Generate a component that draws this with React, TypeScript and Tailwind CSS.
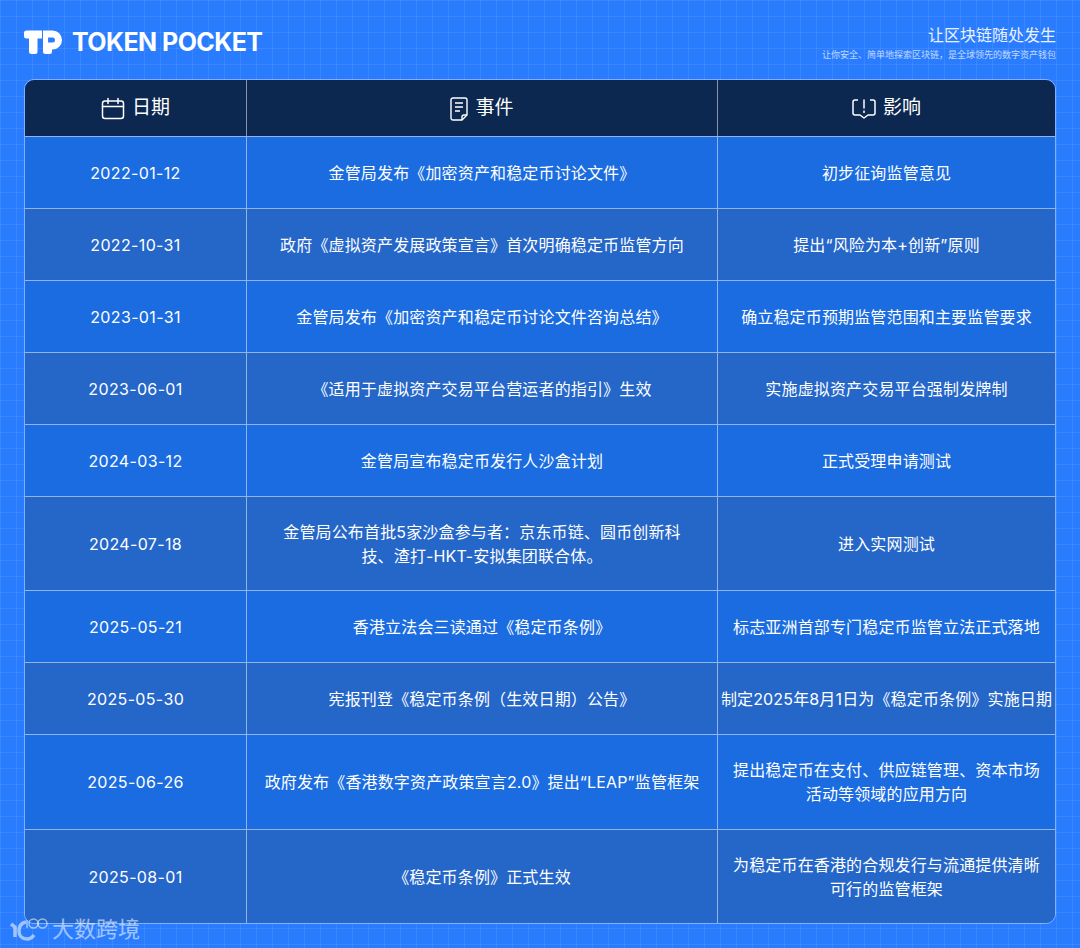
const rows = [
  { date: "2022-01-12", event: ["金管局发布《加密资产和稳定币讨论文件》"], impact: ["初步征询监管意见"], h: "h-[72px]" },
  { date: "2022-10-31", event: ["政府《虚拟资产发展政策宣言》首次明确稳定币监管方向"], impact: ["提出“风险为本+创新”原则"], h: "h-[72px]" },
  { date: "2023-01-31", event: ["金管局发布《加密资产和稳定币讨论文件咨询总结》"], impact: ["确立稳定币预期监管范围和主要监管要求"], h: "h-[72px]" },
  { date: "2023-06-01", event: ["《适用于虚拟资产交易平台营运者的指引》生效"], impact: ["实施虚拟资产交易平台强制发牌制"], h: "h-[72px]" },
  { date: "2024-03-12", event: ["金管局宣布稳定币发行人沙盒计划"], impact: ["正式受理申请测试"], h: "h-[72px]" },
  { date: "2024-07-18", event: ["金管局公布首批5家沙盒参与者：京东币链、圆币创新科", "技、渣打-HKT-安拟集团联合体。"], impact: ["进入实网测试"], h: "h-[94px]" },
  { date: "2025-05-21", event: ["香港立法会三读通过《稳定币条例》"], impact: ["标志亚洲首部专门稳定币监管立法正式落地"], h: "h-[72px]" },
  { date: "2025-05-30", event: ["宪报刊登《稳定币条例（生效日期）公告》"], impact: ["制定2025年8月1日为《稳定币条例》实施日期"], h: "h-[72px]" },
  { date: "2025-06-26", event: ["政府发布《香港数字资产政策宣言2.0》提出“LEAP”监管框架"], impact: ["提出稳定币在支付、供应链管理、资本市场", "活动等领域的应用方向"], h: "h-[95px]" },
  { date: "2025-08-01", event: ["《稳定币条例》正式生效"], impact: ["为稳定币在香港的合规发行与流通提供清晰", "可行的监管框架"], h: "h-[94px]" },
]

const CalendarIcon = () => (
  <svg width="24" height="24" viewBox="0 0 24 24" fill="none" stroke="currentColor" strokeWidth="1.5">
    <rect x="1.5" y="4" width="21" height="17.5" rx="2.5" />
    <path d="M1.5 9.5h21M7 1.500v5M17 1.500v5" strokeLinecap="round" />
  </svg>
)

const DocIcon = () => (
  <svg width="18" height="24" viewBox="0 0 18 24" fill="none" stroke="currentColor" strokeWidth="1.4">
    <path d="M3 1h12a2 2 0 0 1 2 2v15l-5 5H3a2 2 0 0 1-2-2V3a2 2 0 0 1 2-2z" />
    <path d="M12 23v-3a2 2 0 0 1 2-2h3M5 6h8M5 10h8M5 14h5" />
  </svg>
)

const NoticeIcon = () => (
  <svg width="24" height="22" viewBox="0 0 24 22" fill="none" stroke="currentColor" strokeWidth="1.5">
    <path d="M6 2H3a2 2 0 0 0-2 2v11a2 2 0 0 0 2 2h5l4 3 4-3h5a2 2 0 0 0 2-2V4a2 2 0 0 0-2-2h-3" strokeLinejoin="round" />
    <path d="M12 2v8M12 13v1.600" strokeLinecap="round" />
  </svg>
)

const TpLogo = () => (
  <svg width="38" height="25" viewBox="0 0 38 25" fill="white" fillRule="evenodd">
    <path d="M2.500 0.500h15.500v8h-4.500v13a2.500 2.500 0 0 1-2.500 2.500h-3.500a2.500 2.500 0 0 1-2.500-2.500V8.500h-2.500a2.500 2.500 0 0 1-2.500-2.500V3a2.500 2.500 0 0 1 2.500-2.500z" />
    <path d="M19 0.500h9.500a9.500 9.500 0 0 1 0 19H28v2a2.500 2.500 0 0 1-2.500 2.500h-4a2.500 2.500 0 0 1-2.500-2.500zM24 7.500v5h4.500a2.500 2.500 0 0 0 0-5z" />
  </svg>
)

const WatermarkLogo = () => (
  <svg width="38" height="24" viewBox="0 0 38 24" fill="none" stroke="white" strokeOpacity="0.55">
    <path d="M1 7l4 3v10" strokeWidth="3.500" />
    <path d="M16 5c-5 1-7 5-7 9 0 5 3 8 8 8 3 0 5-1 7-4" strokeWidth="3.500" />
    <path d="M17 3v8" strokeWidth="1.500" />
    <circle cx="23.500" cy="6.500" r="4.500" strokeWidth="1.500" />
    <circle cx="32.500" cy="6.500" r="4.500" strokeWidth="1.500" />
  </svg>
)

const App = () => {
  return (
    <div className="relative w-[1080px] h-[948px] overflow-hidden bg-[#2a7cff] bg-[linear-gradient(rgba(255,255,255,0.08)_1px,transparent_1px),linear-gradient(90deg,rgba(255,255,255,0.08)_1px,transparent_1px)] bg-[size:16px_16px] font-['Inter','Noto_Sans_CJK_SC',sans-serif] text-white">
      <div className="h-[79px] px-6 flex items-center justify-between">
        <div className="flex items-center gap-[10px] mt-[5px]">
          <TpLogo />
          <span className="font-['Inter',sans-serif] font-bold text-[25px] leading-none tracking-[-0.55px]">TOKEN POCKET</span>
        </div>
        <div className="flex flex-col items-end mt-[6px]">
          <span className="text-[16px] leading-[20px] opacity-90">让区块链随处发生</span>
          <span className="text-[9px] leading-[12px] mt-[4px] opacity-70">让你安全、简单地探索区块链，是全球领先的数字资产钱包</span>
        </div>
      </div>

      <div className="mx-6 w-[1032px] rounded-[10px] overflow-hidden border border-white/40">
        <div className="flex h-[56px] bg-[#0c2850] text-[19px]">
          <div className="w-[222px] pt-[1px] flex items-center justify-center gap-[7px] border-r border-white/50"><CalendarIcon />日期</div>
          <div className="w-[471px] pt-[1px] flex items-center justify-center gap-[7px] border-r border-white/50"><DocIcon />事件</div>
          <div className="flex-1 pt-[1px] flex items-center justify-center gap-[7px]"><NoticeIcon />影响</div>
        </div>
        {rows.map((row, i) => (
          <div key={row.date} className={`flex ${row.h} border-t border-white/50 text-[16px] leading-[24px] tracking-[0.15px] ${i % 2 === 0 ? "bg-[#1a6ce0]" : "bg-[#2566c9]"}`}>
            <div className="w-[222px] flex items-center justify-center border-r border-white/50 tracking-[0.35px]">{row.date}</div>
            <div className="w-[471px] flex flex-col items-center justify-center border-r border-white/50">
              {row.event.map((t) => <span key={t}>{t}</span>)}
            </div>
            <div className="flex-1 flex flex-col items-center justify-center whitespace-nowrap">
              {row.impact.map((t) => <span key={t}>{t}</span>)}
            </div>
          </div>
        ))}
      </div>

      <div className="absolute left-[10px] top-[915px] flex items-center gap-[4px] text-[22px] leading-[28px] text-white/55">
        <WatermarkLogo />
        <span>大数跨境</span>
      </div>
    </div>
  )
}

export default App
